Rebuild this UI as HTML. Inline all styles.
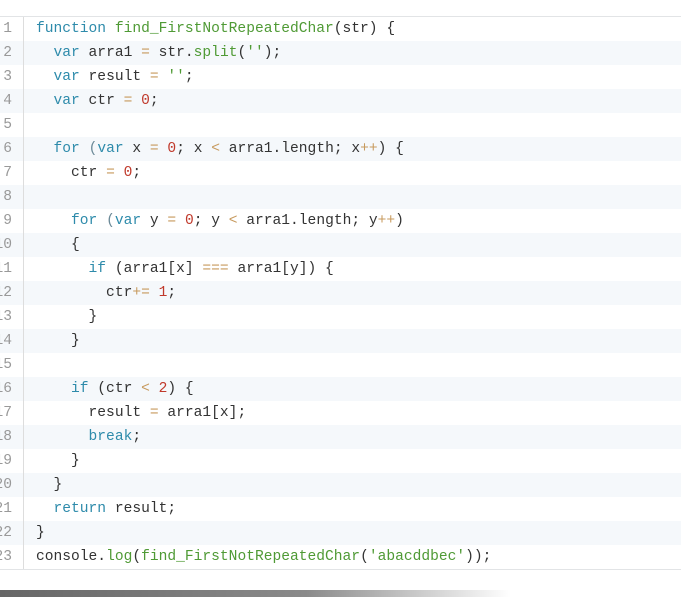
<!DOCTYPE html>
<html><head><meta charset="utf-8"><style>
body{margin:0;background:#fff;width:681px;height:597px;overflow:hidden;position:relative}
.box{position:absolute;left:-10px;top:16px;width:700px;border-top:1px solid #e2e4e6;border-bottom:1px solid #e2e4e6}
.l{height:24px;line-height:25px;font-family:"Liberation Mono",monospace;font-size:14.6px;color:#333;white-space:pre;position:relative}
.l:nth-child(even){background:#f5f8fb}
.n{position:absolute;left:0;width:22px;text-align:right;color:#999;border-right:1px solid #ddd;height:24px;padding-right:11px}
.c{position:absolute;left:46px}
.k{color:#2e8bab}.f{color:#4f9a35}.o{color:#c79a5e}.d{color:#c0392b}.s{color:#4f9a35}.p{color:#6c8a98}
.sh{position:absolute;left:0;top:590px;width:681px;height:7px;background:linear-gradient(to right,#666,#8a8a8a 45%,rgba(220,220,220,0) 75%)}
</style></head><body>
<div class="box">
<div class="l"><span class="n">1</span><span class="c"><span class="k">function</span> <span class="f">find_FirstNotRepeatedChar</span>(str) {</span></div>
<div class="l"><span class="n">2</span><span class="c">  <span class="k">var</span> arra1 <span class="o">=</span> str.<span class="f">split</span>(<span class="s">''</span>);</span></div>
<div class="l"><span class="n">3</span><span class="c">  <span class="k">var</span> result <span class="o">=</span> <span class="s">''</span>;</span></div>
<div class="l"><span class="n">4</span><span class="c">  <span class="k">var</span> ctr <span class="o">=</span> <span class="d">0</span>;</span></div>
<div class="l"><span class="n">5</span><span class="c"> </span></div>
<div class="l"><span class="n">6</span><span class="c">  <span class="k">for</span> <span class="p">(</span><span class="k">var</span> x <span class="o">=</span> <span class="d">0</span>; x <span class="o">&lt;</span> arra1.length; x<span class="o">++</span>) {</span></div>
<div class="l"><span class="n">7</span><span class="c">    ctr <span class="o">=</span> <span class="d">0</span>;</span></div>
<div class="l"><span class="n">8</span><span class="c"> </span></div>
<div class="l"><span class="n">9</span><span class="c">    <span class="k">for</span> <span class="p">(</span><span class="k">var</span> y <span class="o">=</span> <span class="d">0</span>; y <span class="o">&lt;</span> arra1.length; y<span class="o">++</span>)</span></div>
<div class="l"><span class="n">10</span><span class="c">    {</span></div>
<div class="l"><span class="n">11</span><span class="c">      <span class="k">if</span> (arra1[x] <span class="o">===</span> arra1[y]) {</span></div>
<div class="l"><span class="n">12</span><span class="c">        ctr<span class="o">+=</span> <span class="d">1</span>;</span></div>
<div class="l"><span class="n">13</span><span class="c">      }</span></div>
<div class="l"><span class="n">14</span><span class="c">    }</span></div>
<div class="l"><span class="n">15</span><span class="c"> </span></div>
<div class="l"><span class="n">16</span><span class="c">    <span class="k">if</span> (ctr <span class="o">&lt;</span> <span class="d">2</span>) {</span></div>
<div class="l"><span class="n">17</span><span class="c">      result <span class="o">=</span> arra1[x];</span></div>
<div class="l"><span class="n">18</span><span class="c">      <span class="k">break</span>;</span></div>
<div class="l"><span class="n">19</span><span class="c">    }</span></div>
<div class="l"><span class="n">20</span><span class="c">  }</span></div>
<div class="l"><span class="n">21</span><span class="c">  <span class="k">return</span> result;</span></div>
<div class="l"><span class="n">22</span><span class="c">}</span></div>
<div class="l"><span class="n">23</span><span class="c">console.<span class="f">log</span>(<span class="f">find_FirstNotRepeatedChar</span>(<span class="s">'abacddbec'</span>));</span></div>
</div>
<div class="sh"></div>
</body></html>
